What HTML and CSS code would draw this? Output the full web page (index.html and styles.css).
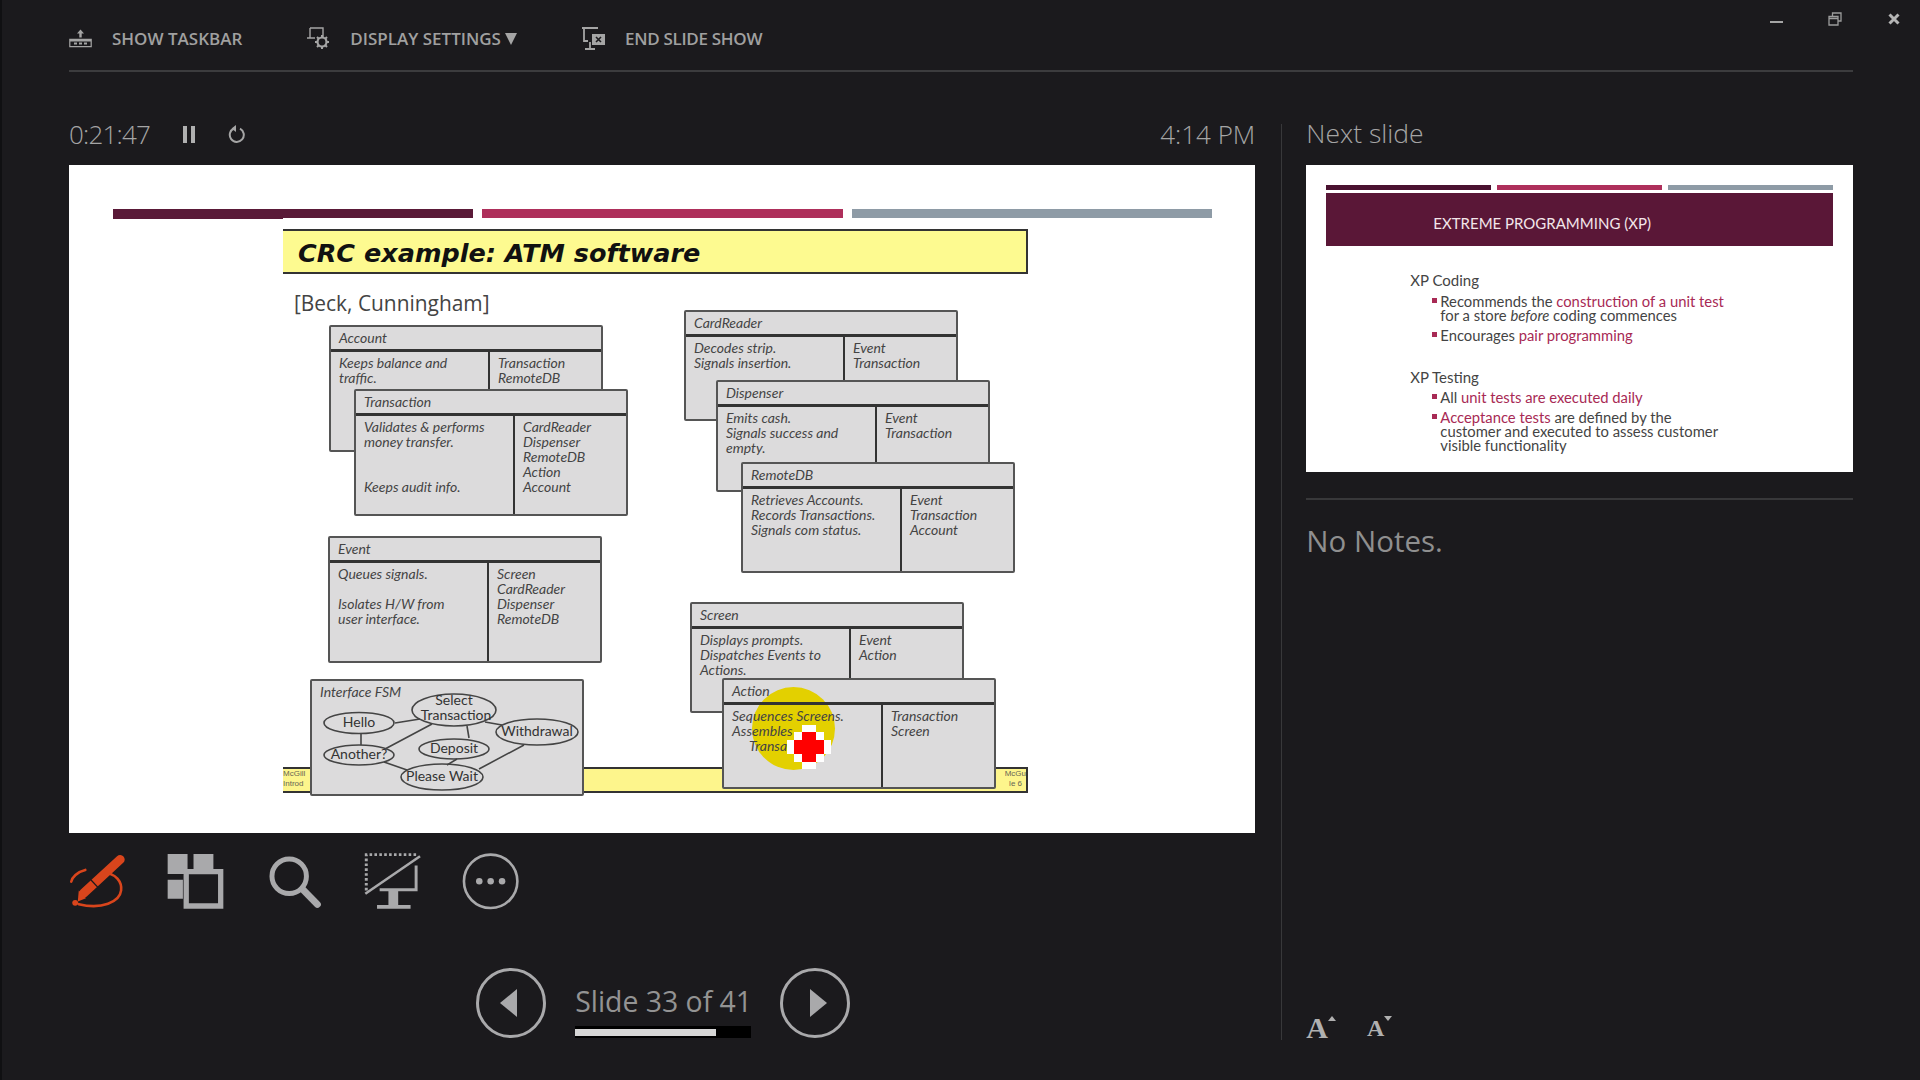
FILE: index.html
```html
<!DOCTYPE html>
<html lang="en">
<head>
    <meta charset="UTF-8">
    <title>Presenter View</title>
    <link rel="stylesheet" href="styles.css">
</head>
<body>
    <div id="wrap">
        <!-- window buttons -->
        <div class="winbtns">
            <span class="win-min"></span>
            <svg class="win-restore" viewBox="0 0 14 14"><path d="M4.500 4V1h8.500v8H10M1 4.500h9V13H1zM1 6.500h9" fill="none" stroke="#9c9c9c" stroke-width="1.300"/></svg>
            <svg class="win-close" viewBox="0 0 12 12"><path d="M1.500 1.500l9 9M10.500 1.500l-9 9" fill="none" stroke="#b5b5b5" stroke-width="3"/></svg>
        </div>

        <div class="toolbar">
            <div class="tool">
                <svg class="tool-ico" viewBox="0 0 23 18"><path d="M11.500 0l3.500 4h-2.300v4h-2.400V4H8z" fill="#a5a5a5"/><path d="M.8 9.800h21.400v7.400H.8z" fill="none" stroke="#a5a5a5" stroke-width="1.200"/><path d="M1 9.500h21V12H1zM5 13h3v2H5zM10 13h3v2h-3zM15 13h3v2h-3z" fill="#a5a5a5"/></svg>
                SHOW TASKBAR
            </div>
            <div class="tool">
                <svg class="tool-ico" viewBox="0 0 23 23"><path d="M3 1h13v9M3 1v10h5M6 11H0" fill="none" stroke="#a5a5a5" stroke-width="1.400"/><circle cx="15" cy="15" r="4.500" fill="none" stroke="#a5a5a5" stroke-width="2.200"/><path d="M15 8v3M15 19v3M8 15h3M19 15h3M10 10l2 2M18 18l2 2M20 10l-2 2M12 18l-2 2" stroke="#a5a5a5" stroke-width="2"/></svg>
                DISPLAY SETTINGS <span class="caret"></span>
            </div>
            <div class="tool">
                <svg class="tool-ico" viewBox="0 0 23 23"><path d="M0 1h16M2 1v13h4M8 15v6M3 22h10" fill="none" stroke="#a5a5a5" stroke-width="1.800"/><path d="M10 7h13v11H10z" fill="#a5a5a5"/><path d="M14 10l5 5M19 10l-5 5" stroke="#1b1a1d" stroke-width="1.600"/></svg>
                <span class="tool-tight">END SLIDE SHOW</span>
            </div>
        </div>

        <div class="main">
            <div class="left">
                <div class="status">
                    <span class="timer">0:21:47</span>
                    <span class="pause"></span>
                    <svg class="reset" viewBox="0 0 18 18"><path d="M6 3.500a7 7 0 1 0 6 .2" fill="none" stroke="#a5a5a5" stroke-width="2"/><path d="M8 0v7L3.500 3.500z" fill="#a5a5a5"/></svg>
                    <span class="clock">4:14 PM</span>
                </div>

                <div class="slide">
                    <div class="bars">
                        <div class="bar bar-dark"></div>
                        <div class="bar bar-pink"></div>
                        <div class="bar bar-grey"></div>
                    </div>
                    <div class="title">CRC example: ATM software</div>
                    <div class="beck">[Beck, Cunningham]</div>
                    <div class="foot">
                        <span>McGill<br>Introd</span>
                        <span>McGu<br>&nbsp;&nbsp;le 6</span>
                    </div>

                    <div class="card c-account">
                        <div class="card-head">Account</div>
                        <div class="card-body">
                            <div>Keeps balance and<br>traffic.</div>
                            <div>Transaction<br>RemoteDB</div>
                        </div>
                    </div>
                    <div class="card c-transaction">
                        <div class="card-head">Transaction</div>
                        <div class="card-body">
                            <div>Validates &amp; performs<br>money transfer.<br><br><br>Keeps audit info.</div>
                            <div>CardReader<br>Dispenser<br>RemoteDB<br>Action<br>Account</div>
                        </div>
                    </div>
                    <div class="card c-cardreader">
                        <div class="card-head">CardReader</div>
                        <div class="card-body">
                            <div>Decodes strip.<br>Signals insertion.</div>
                            <div>Event<br>Transaction</div>
                        </div>
                    </div>
                    <div class="card c-dispenser">
                        <div class="card-head">Dispenser</div>
                        <div class="card-body">
                            <div>Emits cash.<br>Signals success and<br>empty.</div>
                            <div>Event<br>Transaction</div>
                        </div>
                    </div>
                    <div class="card c-remotedb">
                        <div class="card-head">RemoteDB</div>
                        <div class="card-body">
                            <div>Retrieves Accounts.<br>Records Transactions.<br>Signals com status.</div>
                            <div>Event<br>Transaction<br>Account</div>
                        </div>
                    </div>
                    <div class="card c-event">
                        <div class="card-head">Event</div>
                        <div class="card-body">
                            <div>Queues signals.<br><br>Isolates H/W from<br>user interface.</div>
                            <div>Screen<br>CardReader<br>Dispenser<br>RemoteDB</div>
                        </div>
                    </div>
                    <div class="card c-fsm">
                        <div class="card-head fsm-head">Interface FSM</div>
                        <svg class="fsm" viewBox="0 0 270 113">
                            <g stroke="#444" stroke-width="1.600" fill="none">
                                <path d="M83 42l25-4M49 53v11M73 68l47-25M155 45l2 12M173 41l17 3M145 78l-10 6M72 81l23 8M212 64l-45 24"/>
                                <ellipse cx="142" cy="29" rx="42" ry="16"/>
                                <ellipse cx="47" cy="42" rx="35" ry="10.500"/>
                                <ellipse cx="225" cy="51" rx="41" ry="13"/>
                                <ellipse cx="47" cy="74" rx="35" ry="10"/>
                                <ellipse cx="142" cy="68" rx="35" ry="10"/>
                                <ellipse cx="130" cy="96" rx="41" ry="13"/>
                            </g>
                            <g class="fsm-text" text-anchor="middle">
                                <text x="142" y="24">Select</text>
                                <text x="144" y="39">Transaction</text>
                                <text x="47" y="46">Hello</text>
                                <text x="225" y="55">Withdrawal</text>
                                <text x="47" y="78">Another?</text>
                                <text x="142" y="72">Deposit</text>
                                <text x="130" y="100">Please Wait</text>
                            </g>
                        </svg>
                    </div>
                    <div class="card c-screen">
                        <div class="card-head">Screen</div>
                        <div class="card-body">
                            <div>Displays prompts.<br>Dispatches Events to<br>Actions.</div>
                            <div>Event<br>Action</div>
                        </div>
                    </div>
                    <div class="card c-action">
                        <span class="halo"></span>
                        <div class="card-head">Action</div>
                        <div class="card-body">
                            <div>Sequences Screens.<br>Assembles<br><span class="indent">Transactions.</span></div>
                            <div>Transaction<br>Screen</div>
                        </div>
                        <svg class="pointer" viewBox="0 0 44 44" shape-rendering="crispEdges">
                            <path d="M15 0h14v7h8v8h7v14h-7v8h-8v7H15v-7H7v-8H0V15h7V7h8z" fill="#fff"/>
                            <path d="M15 7h14v8h8v14h-8v8H15v-8H7V15h8z" fill="#f00"/>
                        </svg>
                    </div>
                </div>

                <div class="tools">
                    <svg class="big-ico" viewBox="25 40 175 175">
                        <path d="M75 92C50 98 34 115 32 128M130 100c40 2 58 30 55 55-4 35-60 60-130 42" fill="none" stroke="#d9451c" stroke-width="8" stroke-linecap="round"/>
                        <path d="M70 163L182 60" stroke="#d9451c" stroke-width="28" stroke-linecap="round"/>
                        <path d="M92 122l26 28" stroke="#1b1a1d" stroke-width="4"/>
                        <path d="M55 155l22 24-25 10z" fill="#d9451c"/>
                        <circle cx="44" cy="193" r="9" fill="#d9451c"/>
                    </svg>
                    <svg class="big-ico" viewBox="320 38 172 170">
                        <path d="M322 40h60v60h-60zM400 40h60v45h-60zM322 118h46v57h-46z" fill="#a9a9ab"/>
                        <path d="M378 93h104v104H378z" fill="none" stroke="#a9a9ab" stroke-width="16"/>
                    </svg>
                    <svg class="big-ico" viewBox="615 38 172 170">
                        <circle cx="685" cy="107" r="52" fill="none" stroke="#a9a9ab" stroke-width="15"/>
                        <path d="M725 146l45 46" stroke="#a9a9ab" stroke-width="21" stroke-linecap="round"/>
                    </svg>
                    <svg class="big-ico" viewBox="910 40 175 175">
                        <path d="M917 155V45h155" fill="none" stroke="#a9a9ab" stroke-width="9" stroke-dasharray="8 7"/>
                        <path d="M914 165L1082 50" stroke="#a9a9ab" stroke-width="8"/>
                        <path d="M1070 78v75H958" fill="none" stroke="#a9a9ab" stroke-width="9"/>
                        <path d="M985 156h30v44h-30zM950 200h103v11H950z" fill="#a9a9ab"/>
                    </svg>
                    <svg class="big-ico" viewBox="1205 38 175 175">
                        <circle cx="1293" cy="125" r="82" fill="none" stroke="#a9a9ab" stroke-width="8"/>
                        <circle cx="1258" cy="125" r="10" fill="#a9a9ab"/>
                        <circle cx="1293" cy="125" r="10" fill="#a9a9ab"/>
                        <circle cx="1328" cy="125" r="10" fill="#a9a9ab"/>
                    </svg>
                </div>

                <div class="nav">
                    <svg class="nav-btn" viewBox="0 0 70 70"><circle cx="35" cy="35" r="33.500" fill="none" stroke="#a9a9ab" stroke-width="3"/><path d="M24 35l17-14v28z" fill="#a9a9ab"/></svg>
                    <div class="pager">
                        <div class="pager-text">Slide 33 of 41</div>
                        <div class="progress"><div class="progress-fill"></div></div>
                    </div>
                    <svg class="nav-btn" viewBox="0 0 70 70"><circle cx="35" cy="35" r="33.500" fill="none" stroke="#a9a9ab" stroke-width="3"/><path d="M30 21l17 14-17 14z" fill="#a9a9ab"/></svg>
                </div>
            </div>

            <div class="right">
                <div class="next-label">Next slide</div>
                <div class="thumb">
                    <div class="thumb-bars">
                        <div class="thumb-bar tb-dark"></div>
                        <div class="thumb-bar tb-pink"></div>
                        <div class="thumb-bar tb-grey"></div>
                    </div>
                    <div class="thumb-title">EXTREME PROGRAMMING (XP)</div>
                    <div class="xp-head">XP Coding</div>
                    <ul class="xp-list">
                        <li>Recommends the <em>construction of a unit test</em><br>for a store <i>before</i> coding commences</li>
                        <li>Encourages <em>pair programming</em></li>
                    </ul>
                    <div class="xp-head xp-second">XP Testing</div>
                    <ul class="xp-list">
                        <li>All <em>unit tests are executed daily</em></li>
                        <li><em>Acceptance tests</em> are defined by the<br>customer and executed to assess customer<br>visible functionality</li>
                    </ul>
                </div>
                <div class="notes">No Notes.</div>
                <div class="fontbtns">
                    <span class="font-a font-up">A</span>
                    <span class="font-a font-down">A</span>
                </div>
            </div>
        </div>
    </div>
</body>
</html>
```
FILE: styles.css
```css
body{
    margin: 0;
    padding: 0;
    background: #1b1a1d;
}
ul{
    list-style: none;
    margin: 0;
    padding: 0;
}
#wrap{
    position: relative;
    width: 1920px;
    height: 1080px;
    box-sizing: border-box;
    padding: 0 67px;
    overflow: hidden;
    border-left: 2px solid #101012;
    font-family: "Open Sans", "Liberation Sans", sans-serif;
    color: #a5a5a5;
}

/* window buttons */
.winbtns{
    position: absolute;
    top: 0;
    right: 0;
}
.win-min{
    position: absolute;
    top: 21px;
    right: 137px;
    width: 13px;
    height: 2px;
    background: #a5a5a5;
}
.win-restore{
    position: absolute;
    top: 12px;
    right: 78px;
    width: 14px;
    height: 14px;
}
.win-close{
    position: absolute;
    top: 13px;
    right: 20px;
    width: 12px;
    height: 12px;
}

/* top bar */
.toolbar{
    display: flex;
    align-items: center;
    gap: 65px;
    height: 63px;
    padding-top: 7px;
    border-bottom: 2px solid #3c3c3e;
    font-size: 17px;
    font-weight: 600;
    color: #a0a0a0;
}
.tool{
    display: flex;
    align-items: center;
    gap: 20px;
}
.tool-tight{
    letter-spacing: -0.3px;
}
.tool-ico{
    width: 23px;
    height: 23px;
}
.caret{
    display: inline-block;
    margin-left: -16px;
    border-top: 12px solid #a5a5a5;
    border-left: 6.500px solid transparent;
    border-right: 6.500px solid transparent;
}

.main{
    display: flex;
    margin-top: 52px;
}
.left{
    width: 1187px;
    margin-right: 26px;
}
.right{
    display: flex;
    flex-direction: column;
    width: 547px;
    height: 916px;
    padding-left: 24px;
    border-left: 1px solid #38383a;
}

/* timer row */
.status{
    display: flex;
    align-items: center;
    height: 20px;
    padding-bottom: 21px;
    font-size: 26px;
    font-weight: 300;
}
.timer{
    width: 114px;
    letter-spacing: -0.8px;
}
.pause{
    width: 4px;
    height: 17px;
    border-left: 4px solid #b0b0b0;
    border-right: 4px solid #b0b0b0;
}
.reset{
    width: 18px;
    height: 18px;
    margin-left: 33px;
}
.clock{
    margin-left: auto;
}

/* the slide */
.slide{
    position: relative;
    height: 668px;
    background: #fff;
}
.bars{
    display: flex;
    gap: 9px;
    width: 1099px;
    padding: 44px 0 0 44px;
}
.bar{
    position: relative;
    flex: 1;
    height: 9px;
}
.bar-dark{
    background: #5a1a38;
}
.bar-dark:after{
    content: "";
    position: absolute;
    left: 0;
    top: 0;
    width: 170px;
    height: 10px;
    background: #5a1a38;
}
.bar-pink{
    background: #ae2f5b;
}
.bar-grey{
    background: #8e9ba6;
}
.title{
    position: absolute;
    left: 214px;
    top: 64px;
    width: 745px;
    height: 45px;
    box-sizing: border-box;
    padding-left: 15px;
    background: #fdfa90;
    border: 2px solid #333;
    border-left: none;
    font-family: "DejaVu Sans", sans-serif;
    font-size: 25.500px;
    font-weight: bold;
    font-style: italic;
    line-height: 45px;
    color: #111;
}
.beck{
    position: absolute;
    left: 225px;
    top: 124px;
    font-family: "Open Sans", sans-serif;
    font-size: 20.900px;
    line-height: 28px;
    color: #444;
}
.foot{
    position: absolute;
    left: 214px;
    top: 602px;
    display: flex;
    justify-content: space-between;
    width: 745px;
    height: 26px;
    box-sizing: border-box;
    background: #fdf58c;
    border: 2px solid #333;
    border-left: none;
    font-family: "Liberation Sans", sans-serif;
    font-size: 8px;
    line-height: 10px;
    color: #665;
}

/* CRC cards, free on the slide canvas */
.card{
    position: absolute;
    width: 274px;
    box-sizing: border-box;
    background: #dcdbdc;
    border: 2px solid #555;
    border-radius: 2px;
    font-family: "Lato", sans-serif;
    font-style: italic;
    font-size: 14px;
    line-height: 15px;
    color: #444;
}
.card-head{
    position: relative;
    height: 25px;
    box-sizing: border-box;
    padding: 3px 0 0 8px;
    border-bottom: 3px solid #333;
}
.card-body{
    position: relative;
    display: grid;
    grid-template-columns: 157px 1fr;
    height: calc(100% - 25px);
}
.card-body>div{
    padding: 3px 0 0 8px;
}
.card-body>div:last-child{
    border-left: 2px solid #333;
}
.c-account{ left: 260px; top: 160px; height: 127px; }
.c-transaction{ left: 285px; top: 224px; height: 127px; }
.c-cardreader{ left: 615px; top: 145px; height: 111px; }
.c-dispenser{ left: 647px; top: 215px; height: 112px; }
.c-remotedb{ left: 672px; top: 297px; height: 111px; }
.c-event{ left: 259px; top: 371px; height: 127px; }
.c-fsm{ left: 241px; top: 514px; height: 117px; }
.c-screen{ left: 621px; top: 437px; height: 111px; }
.c-action{ left: 653px; top: 513px; height: 111px; }

.fsm-head{
    position: absolute;
    border: none;
}
.fsm{
    display: block;
    width: 270px;
    height: 113px;
}
.fsm-text{
    font-family: "Lato", sans-serif;
    font-style: normal;
    font-size: 14px;
    fill: #333;
}
.halo{
    position: absolute;
    left: 28px;
    top: 7px;
    width: 83px;
    height: 83px;
    border-radius: 50%;
    background: #e3d000;
}
.indent{
    padding-left: 17px;
}
.pointer{
    position: absolute;
    left: 63px;
    top: 45px;
    width: 44px;
    height: 44px;
}

/* big icons under the slide */
.tools{
    display: flex;
    gap: 41.300px;
    margin-top: 20px;
}
.big-ico{
    width: 57px;
    height: 57px;
}

.nav{
    display: flex;
    justify-content: center;
    align-items: flex-start;
    gap: 29px;
    margin-top: 58px;
    padding-left: 2px;
}
.nav-btn{
    width: 70px;
    height: 70px;
}
.pager{
    width: 176px;
}
.pager-text{
    height: 58px;
    font-size: 28.400px;
    line-height: 66px;
    white-space: nowrap;
    color: #939393;
}
.progress{
    height: 12px;
    background: #000;
}
.progress-fill{
    position: relative;
    top: 3px;
    width: 141px;
    height: 7px;
    background: #d6d6d6;
}

/* next slide */
.next-label{
    height: 41px;
    font-size: 26.500px;
    font-weight: 300;
    line-height: 19px;
}
.thumb{
    height: 307px;
    box-sizing: border-box;
    padding: 20px 20px 0;
    background: #fff;
    font-family: "Lato", sans-serif;
    font-size: 14.800px;
    line-height: 14px;
    color: #444;
}
.thumb-bars{
    display: flex;
    gap: 6px;
}
.thumb-bar{
    flex: 1;
    height: 5px;
}
.tb-dark{
    background: #4a1230;
}
.tb-pink{
    background: #ae2f5b;
}
.tb-grey{
    background: #8e9ba6;
}
.thumb-title{
    height: 53px;
    margin-top: 3px;
    padding-left: 107px;
    background: #5a1737;
    font-size: 15px;
    line-height: 60px;
    color: #f3e6ea;
}
.xp-head{
    margin: 26px 0 0 84px;
    font-size: 15px;
    line-height: 16px;
}
.xp-second{
    margin-top: 27px;
}
.xp-list{
    margin: 6px 0 0 106px;
}
.xp-second + .xp-list{
    margin-top: 5px;
}
.xp-list li{
    position: relative;
    margin-bottom: 6px;
    padding-left: 8px;
}
.xp-list li:before{
    content: "";
    position: absolute;
    left: 0;
    top: 4px;
    width: 5px;
    height: 5px;
    background: #a82a55;
}
.xp-list em{
    font-style: normal;
    color: #a82a55;
}
.notes{
    margin-top: 26px;
    padding-top: 22px;
    border-top: 2px solid #38383a;
    font-size: 29.500px;
    line-height: 38px;
    color: #8f8f8f;
}
.fontbtns{
    display: flex;
    align-items: flex-end;
    gap: 39px;
    margin-top: auto;
    font-family: "Liberation Serif", serif;
    font-weight: bold;
    color: #b0b0b0;
}
.font-a{
    position: relative;
    line-height: 24px;
}
.font-up{
    font-size: 30px;
}
.font-down{
    font-size: 24px;
}
.font-a:after{
    content: "";
    position: absolute;
    right: -8px;
    top: 0;
    border-left: 4px solid transparent;
    border-right: 4px solid transparent;
}
.font-up:after{
    border-bottom: 5px solid #b0b0b0;
}
.font-down:after{
    border-top: 5px solid #b0b0b0;
}
```
